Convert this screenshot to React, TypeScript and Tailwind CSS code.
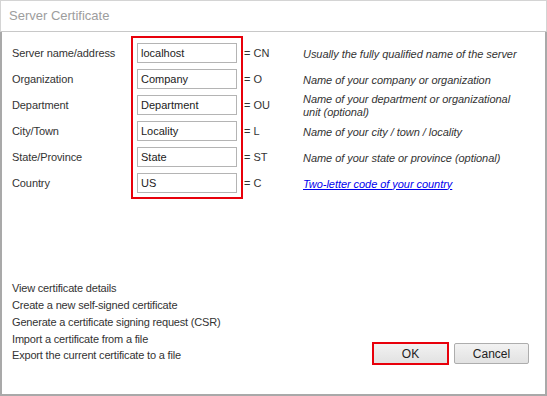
import React from "react";

const rows = [
  { label: "Server name/address", value: "localhost", code: "= CN", desc: ["Usually the fully qualified name of the server"] },
  { label: "Organization", value: "Company", code: "= O", desc: ["Name of your company or organization"] },
  { label: "Department", value: "Department", code: "= OU", desc: ["Name of your department or organizational", "unit (optional)"] },
  { label: "City/Town", value: "Locality", code: "= L", desc: ["Name of your city / town / locality"] },
  { label: "State/Province", value: "State", code: "= ST", desc: ["Name of your state or province (optional)"] },
  { label: "Country", value: "US", code: "= C", desc: [], link: "Two-letter code of your country" },
];

const actions = [
  "View certificate details",
  "Create a new self-signed certificate",
  "Generate a certificate signing request (CSR)",
  "Import a certificate from a file",
  "Export the current certificate to a file",
];

export default function App() {
  return (
    <div
      className="w-[547px] h-[396px] bg-white flex flex-col text-[#333] text-[11px]"
      style={{ fontFamily: '"Liberation Sans", Arial, sans-serif' }}
    >
      <div className="h-[32px] shrink-0 border border-[#d4d4d4] border-b-[#c8c8c8] flex items-center pl-[8px] pb-[1px] text-[13px] text-[#9d9d9d]">
        Server Certificate
      </div>
      <div className="flex-1 flex flex-col border-l-2 border-r-2 border-b-2 border-[#a9a9a9]">
        <div className="flex pt-[4px]">
          <div className="w-[129px] pl-[10px] pt-[4px] flex flex-col tracking-[-0.1px]">
            {rows.map((r) => (
              <div key={r.label} className="h-[26px] flex items-center">
                {r.label}
              </div>
            ))}
          </div>
          <div className="border-2 border-[#e8000b] px-[4px] pt-[2px] pb-[1px] flex flex-col">
            {rows.map((r) => (
              <div key={r.label} className="h-[26px] flex items-center">
                <div className="w-[100px] h-[20px] border border-[#b4b4b4] flex items-center pl-[3px] text-[#222]">
                  {r.value}
                </div>
              </div>
            ))}
          </div>
          <div className="pt-[4px] pl-[1px] flex flex-col">
            {rows.map((r) => (
              <div key={r.label} className="h-[26px] flex items-center">
                <div className="w-[59px]">{r.code}</div>
                <div className="italic leading-[13px] pt-[2px] tracking-[-0.05px]">
                  {r.desc.map((d) => (
                    <div key={d}>{d}</div>
                  ))}
                  {r.link && <span className="text-[#0000ee] underline">{r.link}</span>}
                </div>
              </div>
            ))}
          </div>
        </div>
        <div className="flex-1" />
        <div className="flex items-end justify-between pl-[10px] pr-[16px] pb-[29px]">
          <div className="flex flex-col tracking-[-0.18px] pb-[1px]">
            {actions.map((a) => (
              <div key={a} className="h-[16.75px] flex items-center">
                {a}
              </div>
            ))}
          </div>
          <div className="flex items-center gap-[5px]">
            <div className="w-[77px] h-[23px] border-2 border-[#e8000b] bg-gradient-to-b from-[#f2f2f2] to-[#e2e2e2] flex items-center justify-center text-[12px] text-[#222]">
              OK
            </div>
            <div className="w-[75px] h-[21px] border border-[#adadad] rounded-[2px] bg-gradient-to-b from-[#f2f2f2] to-[#e2e2e2] flex items-center justify-center text-[12px] text-[#222]">
              Cancel
            </div>
          </div>
        </div>
      </div>
    </div>
  );
}
